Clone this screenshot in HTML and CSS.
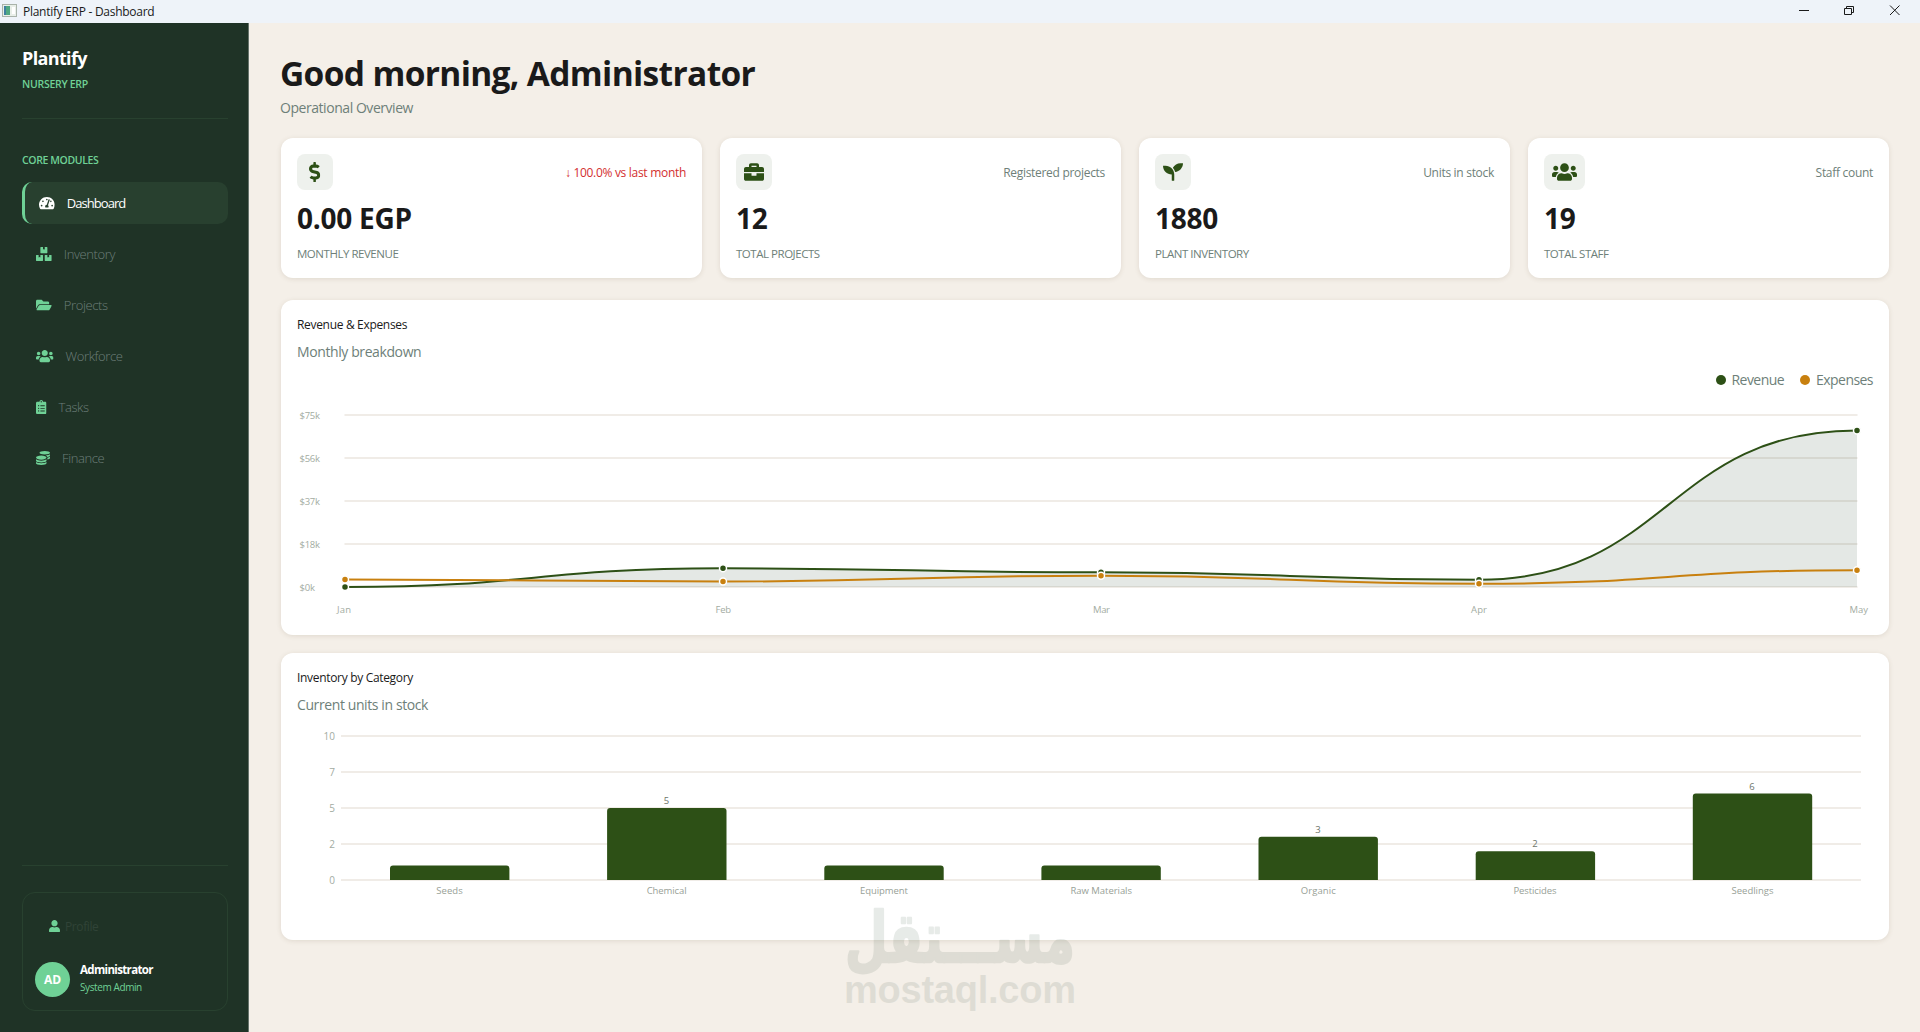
FILE: index.html
```html
<!DOCTYPE html>
<html lang="en">
<head>
<meta charset="utf-8">
<title>Plantify ERP - Dashboard</title>
<link rel="stylesheet" href="styles.css">
</head>
<body>
<svg class="defs" width="0" height="0">
  <symbol id="i-gauge" viewBox="0 0 576 512"><path d="M288 32C128.94 32 0 160.94 0 320c0 52.8 14.25 102.26 39.06 144.8 5.61 9.62 16.3 15.2 27.44 15.2h443c11.14 0 21.83-5.58 27.44-15.2C561.75 422.26 576 372.8 576 320c0-159.06-128.94-288-288-288zm0 64c14.71 0 26.58 10.13 30.32 23.65-1.11 2.26-2.64 4.23-3.45 6.67l-9.22 27.67c-5.13 3.49-10.97 6.01-17.64 6.01-17.67 0-32-14.33-32-32S270.33 96 288 96zM96 384c-17.67 0-32-14.33-32-32s14.33-32 32-32 32 14.33 32 32-14.33 32-32 32zm48-160c-17.67 0-32-14.33-32-32s14.33-32 32-32 32 14.33 32 32-14.33 32-32 32zm246.77-72.41l-61.33 184C343.13 347.33 352 364.54 352 384c0 11.72-3.38 22.55-8.88 32H232.88c-5.5-9.45-8.88-20.28-8.88-32 0-33.94 26.5-61.43 59.9-63.59l61.34-184.01c4.17-12.56 17.73-19.45 30.36-15.17 12.57 4.19 19.35 17.79 15.17 30.36zm14.66 57.2l15.52-46.55c3.47-1.29 7.13-2.23 11.05-2.23 17.67 0 32 14.33 32 32s-14.33 32-32 32c-11.38-.01-20.89-6.28-26.57-15.22zM480 384c-17.67 0-32-14.33-32-32s14.33-32 32-32 32 14.33 32 32-14.33 32-32 32z"/></symbol>
  <symbol id="i-boxes" viewBox="0 0 576 512"><path d="M560 288h-80v96l-32-21.3-32 21.3v-96h-80c-8.8 0-16 7.2-16 16v192c0 8.8 7.2 16 16 16h224c8.8 0 16-7.2 16-16V304c0-8.8-7.2-16-16-16zm-384-64h224c8.8 0 16-7.2 16-16V16c0-8.8-7.2-16-16-16h-80v96l-32-21.3L256 96V0h-80c-8.8 0-16 7.2-16 16v192c0 8.8 7.2 16 16 16zm64 64h-80v96l-32-21.3L96 384v-96H16c-8.8 0-16 7.2-16 16v192c0 8.8 7.2 16 16 16h224c8.8 0 16-7.2 16-16V304c0-8.8-7.2-16-16-16z"/></symbol>
  <symbol id="i-folder" viewBox="0 0 576 512"><path d="M572.694 292.093L500.27 416.248A63.997 63.997 0 0 1 444.989 448H45.025c-18.523 0-30.064-20.093-20.731-36.093l72.424-124.155A64 64 0 0 1 152 256h399.964c18.523 0 30.064 20.093 20.73 36.093zM152 224h328v-48c0-26.51-21.49-48-48-48H272l-64-64H48C21.49 64 0 85.49 0 112v278.046l69.077-118.418C86.214 242.25 117.989 224 152 224z"/></symbol>
  <symbol id="i-users" viewBox="0 0 640 512"><path d="M96 224c35.3 0 64-28.7 64-64s-28.7-64-64-64-64 28.7-64 64 28.7 64 64 64zm448 0c35.3 0 64-28.7 64-64s-28.7-64-64-64-64 28.7-64 64 28.7 64 64 64zm32 32h-64c-17.6 0-33.5 7.1-45.1 18.6 40.3 22.1 68.9 62 75.1 109.4h66c17.7 0 32-14.3 32-32v-32c0-35.3-28.7-64-64-64zm-256 0c61.9 0 112-50.1 112-112S381.9 32 320 32 208 82.1 208 144s50.1 112 112 112zm76.8 32h-8.3c-20.8 10-43.9 16-68.5 16s-47.6-6-68.5-16h-8.3C179.6 288 128 339.6 128 403.2V432c0 26.5 21.5 48 48 48h288c26.5 0 48-21.5 48-48v-28.8c0-63.6-51.6-115.2-115.2-115.2zm-223.7-13.4C161.5 263.1 145.6 256 128 256H64c-35.3 0-64 28.7-64 64v32c0 17.7 14.3 32 32 32h65.9c6.3-47.4 34.9-87.3 75.2-109.4z"/></symbol>
  <symbol id="i-clipboard" viewBox="0 0 384 512"><path d="M336 64h-80c0-35.3-28.7-64-64-64s-64 28.7-64 64H48C21.5 64 0 85.5 0 112v352c0 26.5 21.5 48 48 48h288c26.5 0 48-21.5 48-48V112c0-26.5-21.5-48-48-48zM96 424c-13.3 0-24-10.7-24-24s10.7-24 24-24 24 10.7 24 24-10.7 24-24 24zm0-96c-13.3 0-24-10.7-24-24s10.7-24 24-24 24 10.7 24 24-10.7 24-24 24zm0-96c-13.3 0-24-10.7-24-24s10.7-24 24-24 24 10.7 24 24-10.7 24-24 24zm96-192c13.3 0 24 10.7 24 24s-10.7 24-24 24-24-10.7-24-24 10.7-24 24-24zm128 368c0 4.4-3.6 8-8 8H168c-4.4 0-8-3.6-8-8v-16c0-4.4 3.6-8 8-8h144c4.4 0 8 3.6 8 8v16zm0-96c0 4.4-3.6 8-8 8H168c-4.4 0-8-3.6-8-8v-16c0-4.4 3.6-8 8-8h144c4.4 0 8 3.6 8 8v16zm0-96c0 4.4-3.6 8-8 8H168c-4.4 0-8-3.6-8-8v-16c0-4.4 3.6-8 8-8h144c4.4 0 8 3.6 8 8v16z"/></symbol>
  <symbol id="i-coins" viewBox="0 0 512 512"><path d="M0 405.3V448c0 35.3 86 64 192 64s192-28.7 192-64v-42.7C342.7 434.4 267.2 448 192 448S41.3 434.4 0 405.3zM320 128c106 0 192-28.7 192-64S426 0 320 0 128 28.7 128 64s86 64 192 64zM0 300.4V352c0 35.3 86 64 192 64s192-28.7 192-64v-51.6c-41.3 34-116.9 51.6-192 51.6S41.3 334.4 0 300.4zm416 11c57.3-11.1 96-31.7 96-55.4v-42.7c-23.2 16.4-57.3 27.6-96 34.5v63.6zM192 160C86 160 0 195.8 0 240s86 80 192 80 192-35.8 192-80-86-80-192-80zm219.3 56.3c60-10.8 100.7-32 100.7-56.3v-42.7c-35.5 25.1-96.5 38.6-160.7 41.8 29.5 14.3 51.2 33.5 60 57.2z"/></symbol>
  <symbol id="i-user" viewBox="0 0 448 512"><path d="M224 256c70.7 0 128-57.3 128-128S294.7 0 224 0 96 57.3 96 128s57.3 128 128 128zm89.6 32h-16.7c-22.2 10.2-46.9 16-72.9 16s-50.6-5.8-72.9-16h-16.7C60.2 288 0 348.2 0 422.4V464c0 26.5 21.5 48 48 48h352c26.5 0 48-21.5 48-48v-41.6c0-74.2-60.2-134.4-134.4-134.4z"/></symbol>
  <symbol id="i-dollar" viewBox="0 0 288 512"><path d="M209.2 233.4l-108-31.6C88.7 198.2 80 186.5 80 173.5c0-16.3 13.2-29.5 29.5-29.5h66.3c12.2 0 24.2 3.7 34.2 10.5 6.1 4.1 14.3 3.1 19.5-2l34.8-34c7.1-6.9 6.1-18.4-1.8-24.5C238 74.8 207.4 64.1 176 64V16c0-8.8-7.2-16-16-16h-32c-8.8 0-16 7.2-16 16v48h-2.5C45.8 64-5.4 118.7.5 183.6c4.2 46.1 39.4 83.6 83.8 96.6l102.5 30c12.5 3.7 21.2 15.3 21.2 28.3 0 16.3-13.2 29.5-29.5 29.5h-66.3C100 368 88 364.3 78 357.5c-6.1-4.1-14.3-3.1-19.5 2l-34.8 34c-7.1 6.9-6.1 18.4 1.8 24.5 24.5 19.2 55.1 29.9 86.5 30v48c0 8.8 7.2 16 16 16h32c8.8 0 16-7.2 16-16v-48.2c46.6-.9 90.3-28.6 105.7-72.7 21.5-61.6-14.6-124.8-72.5-141.7z"/></symbol>
  <symbol id="i-briefcase" viewBox="0 0 512 512"><path d="M320 336c0 8.84-7.16 16-16 16h-96c-8.84 0-16-7.16-16-16v-48H0v144c0 25.6 22.4 48 48 48h416c25.6 0 48-22.4 48-48V288H320v48zm144-208h-80V80c0-25.6-22.4-48-48-48H176c-25.6 0-48 22.4-48 48v48H48c-25.6 0-48 22.4-48 48v80h512v-80c0-25.6-22.4-48-48-48zm-144 0H192V96h128v32z"/></symbol>
  <symbol id="i-seedling" viewBox="0 0 512 512"><path d="M64 96H0c0 123.7 100.3 224 224 224v144c0 8.8 7.2 16 16 16h32c8.8 0 16-7.2 16-16V320C288 196.3 187.7 96 64 96zm384-64c-84.2 0-157.4 46.5-195.7 115.2 27.7 30.2 48.2 66.9 59 107.6C424 243.1 512 147.9 512 32h-64z"/></symbol>
</svg>

<header class="titlebar">
  <svg class="app-icon" width="15" height="13" viewBox="0 0 15 13">
    <rect x=".5" y=".5" width="14" height="12" fill="#e9efe9" stroke="#a9b3aa"/>
    <rect x="2" y="2" width="6" height="9" fill="#4fa882"/>
    <rect x="2" y="2" width="2" height="9" fill="#3f7fa0"/>
    <rect x="10" y="3" width="3" height="7" fill="#fff"/>
  </svg>
  <span class="window-title">Plantify ERP - Dashboard</span>
  <svg class="window-controls" width="120" height="23" viewBox="0 0 120 23" fill="none" stroke="#1a1a1a">
    <path d="M8 10.5h10"/>
    <path d="M53.5 8.5h7v6h-7zM55.500 8.500v-2h7v6h-2"/>
    <path d="M99 5.500l9.500 9.500M108.500 5.500l-9.500 9.500"/>
  </svg>
</header>

<div class="shell">
  <aside class="sidebar">
    <div class="brand">Plantify</div>
    <div class="brand-sub">NURSERY ERP</div>
    <div class="section-title">CORE MODULES</div>
    <nav class="nav">
      <a class="nav-item active"><svg width="15.75" height="14"><use href="#i-gauge"/></svg><span>Dashboard</span></a>
      <a class="nav-item"><svg width="15.75" height="14"><use href="#i-boxes"/></svg><span>Inventory</span></a>
      <a class="nav-item"><svg width="15.75" height="14"><use href="#i-folder"/></svg><span>Projects</span></a>
      <a class="nav-item"><svg width="17.5" height="14"><use href="#i-users"/></svg><span>Workforce</span></a>
      <a class="nav-item"><svg width="10.5" height="14"><use href="#i-clipboard"/></svg><span>Tasks</span></a>
      <a class="nav-item"><svg width="14" height="14"><use href="#i-coins"/></svg><span>Finance</span></a>
    </nav>
    <div class="account">
      <div class="profile-link"><svg width="11" height="12.5"><use href="#i-user"/></svg><span>Profile</span></div>
      <div class="account-row">
        <div class="avatar">AD</div>
        <div>
          <div class="account-name">Administrator</div>
          <div class="account-role">System Admin</div>
        </div>
      </div>
    </div>
  </aside>

  <main class="main">
    <h1>Good morning, Administrator</h1>
    <p class="subtitle">Operational Overview</p>

    <section class="stats">
      <article class="card stat">
        <div class="stat-head"><span class="stat-icon"><svg width="11.25" height="20"><use href="#i-dollar"/></svg></span><span class="stat-note down">↓ 100.0% vs last month</span></div>
        <div class="stat-value">0.00 EGP</div>
        <div class="stat-label">MONTHLY REVENUE</div>
      </article>
      <article class="card stat">
        <div class="stat-head"><span class="stat-icon"><svg width="20" height="20"><use href="#i-briefcase"/></svg></span><span class="stat-note">Registered projects</span></div>
        <div class="stat-value">12</div>
        <div class="stat-label">TOTAL PROJECTS</div>
      </article>
      <article class="card stat">
        <div class="stat-head"><span class="stat-icon"><svg width="20" height="20"><use href="#i-seedling"/></svg></span><span class="stat-note">Units in stock</span></div>
        <div class="stat-value">1880</div>
        <div class="stat-label">PLANT INVENTORY</div>
      </article>
      <article class="card stat">
        <div class="stat-head"><span class="stat-icon"><svg width="25" height="20"><use href="#i-users"/></svg></span><span class="stat-note">Staff count</span></div>
        <div class="stat-value">19</div>
        <div class="stat-label">TOTAL STAFF</div>
      </article>
    </section>

    <section class="card revenue">
      <h2>Revenue &amp; Expenses</h2>
      <p class="card-sub">Monthly breakdown</p>
      <div class="legend">
        <span class="legend-item"><i class="dot"></i><span>Revenue</span></span>
        <span class="legend-item"><i class="dot expense"></i><span>Expenses</span></span>
      </div>
      <svg class="chart" width="1576" height="212" viewBox="297 407 1576 212">
        <g class="grid">
          <path d="M344.500 415H1857.500M344.500 458H1857.500M344.500 501H1857.500M344.500 544H1857.500M344.500 587H1857.500"/>
        </g>
        <g class="axis">
          <text x="299.500" y="419" textLength="20.500">$75k</text>
          <text x="299.500" y="462" textLength="20.500">$56k</text>
          <text x="299.500" y="505" textLength="20.500">$37k</text>
          <text x="299.500" y="548" textLength="20.500">$18k</text>
          <text x="299.500" y="591" textLength="15.500">$0k</text>
          <text x="337" y="613" textLength="14">Jan</text>
          <text x="715.500" y="613" textLength="15.500">Feb</text>
          <text x="1093" y="613" textLength="17">Mar</text>
          <text x="1471" y="613" textLength="16">Apr</text>
          <text x="1849.500" y="613" textLength="18.500">May</text>
        </g>
        <path class="area" d="M345 587C534 587 534 568.300 723 568.300S912 572.300 1101 572.300S1290 579.700 1479 579.700C1668 579.700 1668 430.500 1857 430.500V587Z"/>
        <path class="line rev" d="M345 587C534 587 534 568.300 723 568.300S912 572.300 1101 572.300S1290 579.700 1479 579.700C1668 579.700 1668 430.500 1857 430.500"/>
        <g class="pt rev-pt"><circle cx="345" cy="587" r="3.500"/><circle cx="723" cy="568.300" r="3.500"/><circle cx="1101" cy="572.300" r="3.500"/><circle cx="1479" cy="579.700" r="3.500"/><circle cx="1857" cy="430.500" r="3.500"/></g>
        <path class="line exp" d="M345 579.500C534 579.500 534 581.500 723 581.500S912 575.700 1101 575.700S1290 583.700 1479 583.700S1668 570.200 1857 570.200"/>
        <g class="pt exp-pt"><circle cx="345" cy="579.500" r="3.500"/><circle cx="723" cy="581.500" r="3.500"/><circle cx="1101" cy="575.700" r="3.500"/><circle cx="1479" cy="583.700" r="3.500"/><circle cx="1857" cy="570.200" r="3.500"/></g>
      </svg>
    </section>

    <section class="card inventory">
      <h2>Inventory by Category</h2>
      <p class="card-sub">Current units in stock</p>
      <svg class="chart" width="1576" height="180" viewBox="297 724 1576 180">
        <g class="grid">
          <path d="M341 736H1861M341 772H1861M341 808H1861M341 844H1861M341 880H1861"/>
        </g>
        <g class="axis scale">
          <text x="335" y="740">10</text><text x="335" y="776">7</text><text x="335" y="812">5</text><text x="335" y="848">2</text><text x="335" y="884">0</text>
        </g>
        <g class="bars">
          <path d="M390 880V868.600q0-3 3-3h113.400q3 0 3 3V880z"/>
          <path d="M607.100 880V811q0-3 3-3h113.400q3 0 3 3V880z"/>
          <path d="M824.300 880V868.600q0-3 3-3h113.400q3 0 3 3V880z"/>
          <path d="M1041.400 880V868.600q0-3 3-3h113.400q3 0 3 3V880z"/>
          <path d="M1258.500 880V839.800q0-3 3-3h113.400q3 0 3 3V880z"/>
          <path d="M1475.700 880V854.200q0-3 3-3h113.400q3 0 3 3V880z"/>
          <path d="M1692.800 880V796.600q0-3 3-3h113.400q3 0 3 3V880z"/>
        </g>
        <g class="axis counts">
          <text x="666.500" y="804">5</text><text x="1318" y="833">3</text><text x="1535" y="847">2</text><text x="1752" y="790">6</text>
        </g>
        <g class="axis names">
          <text x="436.200" y="894" textLength="26.500">Seeds</text>
          <text x="646.700" y="894" textLength="40">Chemical</text>
          <text x="860" y="894" textLength="48">Equipment</text>
          <text x="1070.500" y="894" textLength="61.500">Raw Materials</text>
          <text x="1300.800" y="894" textLength="35">Organic</text>
          <text x="1513.500" y="894" textLength="43">Pesticides</text>
          <text x="1731.500" y="894" textLength="42">Seedlings</text>
        </g>
      </svg>
    </section>
  </main>
</div>

<svg class="watermark" width="240" height="120" viewBox="0 0 240 120">
  <text class="wm-arabic" x="5" y="62" textLength="230" lengthAdjust="spacingAndGlyphs" direction="rtl" text-anchor="end">مســـتقل</text>
  <text class="wm-latin" x="4" y="103" textLength="232">mostaql.com</text>
</svg>
</body>
</html>
```
FILE: styles.css
```css
* { box-sizing: border-box; }
body {
  margin: 0;
  width: 1920px;
  height: 1032px;
  overflow: hidden;
  background: #f4efe8;
  font-family: "Open Sans", "Noto Sans", sans-serif;
  color: #1a1a1a;
}
h1, h2, p { margin: 0; font-weight: 400; }
.defs { position: absolute; }
svg { fill: currentColor; flex: none; }

.titlebar {
  height: 23px;
  background: #eef3f9;
  display: flex;
  align-items: center;
  padding: 0 9px 0 2px;
}
.app-icon { margin-top: -2px; }
.window-title { margin-left: 6px; font-size: 12px; line-height: 22px; letter-spacing: -0.28px; flex: 1; white-space: nowrap; }
.window-controls { fill: none; }

.shell { display: flex; height: 1009px; }

.sidebar {
  width: 249px;
  background: #1f3326;
  border-right: 1px solid #66736b;
  padding: 0 20px 0 22px;
  display: flex;
  flex-direction: column;
  color: #6fd196;
  white-space: nowrap;
}
.brand { margin-top: 23px; font-size: 18px; line-height: 24px; font-weight: 700; color: #fff; letter-spacing: -0.65px; }
.brand-sub { padding: 6px 0 27px; font-size: 10.5px; line-height: 16px; font-weight: 600; letter-spacing: -0.28px; border-bottom: 1px solid #28412f; height: 49px; }
.section-title { margin-top: 32px; font-size: 10.5px; line-height: 18px; font-weight: 600; letter-spacing: -0.38px; }
.nav { margin-top: 13px; display: flex; flex-direction: column; gap: 9px; }
.nav-item {
  height: 42px;
  padding-left: 14px;
  display: flex;
  align-items: center;
  gap: 12px;
  border-radius: 10px;
  font-size: 13px;
  line-height: 18px;
}
.nav-item span { margin-top: -1px; color: #6d7f7a; font-weight: 300; letter-spacing: -0.38px; }
.nav-item.active { background: #28402f; border-left: 3px solid #6fd196; color: #fff; }
.nav-item.active span { color: #fff; font-weight: 400; letter-spacing: -1px; letter-spacing: -0.95px; }
.account {
  position: relative;
  margin-top: auto;
  margin-bottom: 21px;
  height: 119px;
  border: 1px solid #28412f;
  border-radius: 13px;
  padding: 26px 12px 0 12px;
}
.account::before { content: ""; position: absolute; left: -1px; right: -1px; top: -28px; height: 1px; background: #28412f; }
.profile-link { display: flex; align-items: center; gap: 5px; height: 14px; padding-left: 14px; font-size: 12px; }
.profile-link span { color: #304337; letter-spacing: -0.4px; }
.account-row { display: flex; gap: 10px; margin-top: 29px; align-items: flex-start; }
.avatar { width: 35px; height: 35px; border-radius: 50%; background: #6fd196; color: #fff; font-size: 12px; font-weight: 700; line-height: 36px; text-align: center; }
.account-name { font-size: 11.5px; line-height: 16px; font-weight: 700; color: #fff; letter-spacing: -0.65px; }
.account-role { font-size: 10px; line-height: 18px; letter-spacing: -0.4px; }

.main { flex: 1; padding: 0 31px 0 32px; }
h1 { margin: 28px 0 0 -1px; font-size: 33.500px; line-height: 44px; font-weight: 700; letter-spacing: -0.65px; white-space: nowrap; }
.subtitle { height: 43px; margin-left: -1px; padding-top: 3px; font-size: 14px; line-height: 20px; letter-spacing: -0.45px; color: #6e7f79; }

.card { background: #fff; border-radius: 12px; box-shadow: 0 1px 5px rgba(90, 70, 40, .13); }
.stats { display: grid; grid-template-columns: 421fr 401fr 371fr 361fr; gap: 18px; }
.stat { height: 140px; padding: 16px 16px 0 16px; white-space: nowrap; }
.stat-head { display: flex; justify-content: space-between; align-items: center; }
.stat-icon { min-width: 36px; height: 36px; padding: 0 8px; border-radius: 8px; background: #eef1ed; color: #2d5016; display: flex; align-items: center; justify-content: center; }
.stat-note { font-size: 12px; color: #6e7f79; letter-spacing: -0.3px; }
.stat-note.down { color: #d32f2f; }
.stat-value { margin-top: 10px; font-size: 28px; line-height: 36px; font-weight: 700; letter-spacing: -0.25px; }
.stat-label { margin-top: 9px; font-size: 11.5px; line-height: 18px; letter-spacing: -0.47px; color: #6e7f79; }

.revenue { margin-top: 22px; height: 335px; padding: 16px 16px 0; }
.inventory { margin-top: 18px; height: 287px; padding: 16px 16px 0; }
h2 { font-size: 12px; line-height: 18px; letter-spacing: -0.32px; }
.card-sub { margin-top: 7px; font-size: 14px; line-height: 22px; letter-spacing: -0.4px; color: #6e7f79; }
.legend { display: flex; justify-content: flex-end; gap: 16px; height: 44px; padding-top: 6px; font-size: 14px; line-height: 22px; color: #6e7f79; letter-spacing: -0.55px; }
.legend-item { display: flex; align-items: center; gap: 6px; height: 22px; }
.dot { width: 10px; height: 10px; border-radius: 50%; background: #2d5016; }
.dot.expense { background: #c8800f; }
.chart { display: block; }
.inventory .chart { margin-top: 8px; }
.grid { fill: none; stroke: #f0ece7; stroke-width: 2; }
.axis { font-size: 9.5px; fill: #a3aca2; }
.scale { font-size: 10px; text-anchor: end; }
.counts { text-anchor: middle; fill: #6e756a; }
.names { fill: #98a197; }
.area { fill: rgba(31, 69, 38, .12); }
.line { fill: none; stroke-width: 2; }
.rev { stroke: #2d5016; }
.exp { stroke: #c8800f; }
.pt { stroke: #fff; stroke-width: 1.5; }
.rev-pt { fill: #2d5016; }
.exp-pt { fill: #c8800f; }
.bars { fill: #2d5016; }

.watermark { position: absolute; left: 840px; top: 900px; fill: #32503c; opacity: .11; overflow: visible; }
.wm-arabic { font: 700 70px "DejaVu Sans", sans-serif; stroke: #32503c; stroke-width: 2.5; stroke-linejoin: round; }
.wm-latin { font: 700 38px "Liberation Sans", sans-serif; }
```
